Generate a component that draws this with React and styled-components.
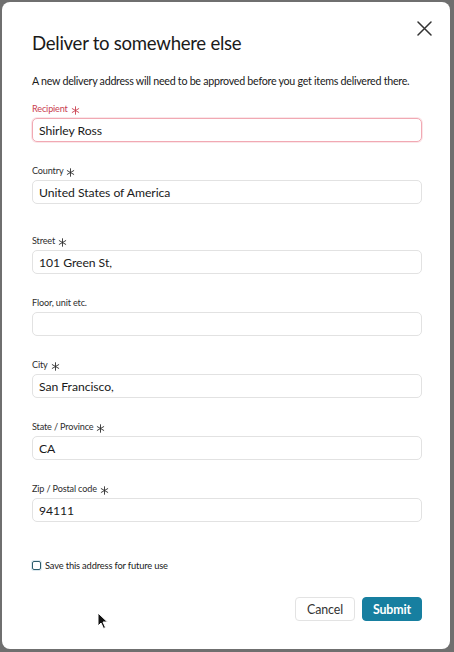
import React from 'react';
import styled, { createGlobalStyle } from 'styled-components';

const GlobalStyle = createGlobalStyle`
  html, body {
    margin: 0;
    padding: 0;
    background: #6f6f6f;
  }
  body {
    font-family: Lato, "Liberation Sans", sans-serif;
    color: #1a1a1a;
  }
`;

const fields = [
  { label: 'Recipient', value: 'Shirley Ross', required: true, error: true },
  { label: 'Country', value: 'United States of America', required: true },
  { label: 'Street', value: '101 Green St,', required: true, extra: true },
  { label: 'Floor, unit etc.', value: '' },
  { label: 'City', value: 'San Francisco,', required: true },
  { label: 'State / Province', value: 'CA', required: true },
  { label: 'Zip / Postal code', value: '94111', required: true },
];

const Asterisk = () => (
  <StarIcon width="9" height="9" viewBox="0 0 10 10">
    <path
      d="M5 0.8 V9.2 M1.4 2.9 L8.6 7.1 M8.6 2.9 L1.4 7.1"
      stroke="currentColor"
      strokeWidth="1"
      strokeLinecap="round"
    />
  </StarIcon>
);

export default () => {
  return (
    <Page>
      <GlobalStyle />
      <Modal>
        <CloseButton aria-label="Close">
          <svg width="15" height="15" viewBox="0 0 15 15">
            <path d="M1 1 L14 14 M14 1 L1 14" stroke="#333" strokeWidth="1.5" strokeLinecap="round" />
          </svg>
        </CloseButton>
        <Title>Deliver to somewhere else</Title>
        <Intro>A new delivery address will need to be approved before you get items delivered there.</Intro>
        <Form>
          {fields.map((f) => (
            <Field key={f.label} $extra={f.extra}>
              <Label $error={f.error}>
                {f.label}
                {f.required && <Asterisk />}
              </Label>
              <Input $error={f.error} defaultValue={f.value} />
            </Field>
          ))}
        </Form>
        <SaveRow>
          <Check />
          <span>Save this address for future use</span>
        </SaveRow>
        <Actions>
          <Button>Cancel</Button>
          <Button $primary>Submit</Button>
        </Actions>
        <Cursor width="12" height="18" viewBox="0 0 12 18">
          <path d="M1 1 L1 14 L4 11 L6.5 16.5 L8.5 15.5 L6 10 L10.5 10 Z" fill="#111" stroke="#fff" strokeWidth="1" />
        </Cursor>
      </Modal>
    </Page>
  );
};

const Page = styled.div`
  width: 454px;
  height: 652px;
  padding: 2px 4px 3px 2px;
  box-sizing: border-box;
`;

const Modal = styled.div`
  position: relative;
  height: 100%;
  background: #fff;
  border-radius: 8px;
  padding: 29px 28px 0 30px;
  box-sizing: border-box;
`;

const CloseButton = styled.button`
  position: absolute;
  top: 17px;
  right: 16px;
  width: 19px;
  height: 19px;
  padding: 0;
  border: none;
  background: none;
  display: flex;
  align-items: center;
  justify-content: center;
`;

const Title = styled.h1`
  margin: 0;
  font-size: 18.6px;
  font-weight: 400;
  letter-spacing: -0.28px;
  color: #1a1a1a;
  line-height: 24px;
`;

const Intro = styled.p`
  margin: 19px 0 0;
  font-size: 10.7px;
  letter-spacing: -0.27px;
  line-height: 14px;
  color: #1a1a1a;
  white-space: nowrap;
`;

const Form = styled.div`
  display: flex;
  flex-direction: column;
  gap: 23px;
  margin-top: 15px;
`;

const Field = styled.div`
  display: flex;
  flex-direction: column;
  gap: 3px;
  margin-top: ${(p) => (p.$extra ? '8px' : '0')};
`;

const Label = styled.label`
  font-size: 9.1px;
  letter-spacing: -0.15px;
  line-height: 12px;
  height: 12px;
  color: ${(p) => (p.$error ? '#c9404f' : '#2e2e2e')};
  display: flex;
  align-items: center;
  gap: 3px;
`;

const StarIcon = styled.svg`
  display: block;
  margin-top: 2px;
`;

const Input = styled.input`
  height: 24px;
  box-sizing: border-box;
  border: 1px solid ${(p) => (p.$error ? '#f1a9b3' : '#e2e2e2')};
  box-shadow: ${(p) => (p.$error ? '0 0 0 1px #fbe6e9' : 'none')};
  border-radius: 5px;
  padding: 0 6px;
  font-family: Lato, "Liberation Sans", sans-serif;
  font-size: 12.2px;
  letter-spacing: -0.05px;
  color: #1a1a1a;
  outline: none;
`;

const SaveRow = styled.label`
  display: flex;
  align-items: center;
  gap: 4px;
  height: 12px;
  margin-top: 37px;
  font-size: 9.3px;
  letter-spacing: -0.15px;
  color: #1a1a1a;
`;

const Check = styled.span`
  width: 7px;
  height: 7px;
  border: 1.5px solid #2c5c6c;
  border-radius: 2px;
  box-shadow: 0 0 0 1px #dbe8ee;
`;

const Actions = styled.div`
  display: flex;
  justify-content: flex-end;
  gap: 7px;
  margin-top: 26px;
`;

const Button = styled.button`
  height: 24px;
  width: 60px;
  padding: 0;
  border-radius: 4px;
  font-family: Lato, "Liberation Sans", sans-serif;
  font-size: 12.4px;
  letter-spacing: -0.1px;
  font-weight: ${(p) => (p.$primary ? 700 : 400)};
  color: ${(p) => (p.$primary ? '#fff' : '#333')};
  background: ${(p) => (p.$primary ? '#177fa0' : '#fff')};
  border: 1px solid ${(p) => (p.$primary ? '#177fa0' : '#e3e3e3')};
`;

const Cursor = styled.svg`
  position: absolute;
  left: 95px;
  top: 610px;
`;
